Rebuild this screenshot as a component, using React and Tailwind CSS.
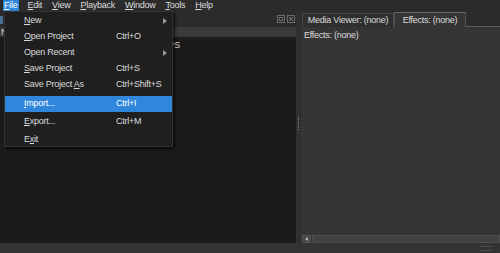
import React from "react";

const menuBar = [
  { label: "File", u: "F", active: true },
  { label: "Edit", u: "E" },
  { label: "View", u: "V" },
  { label: "Playback", u: "P" },
  { label: "Window", u: "W" },
  { label: "Tools", u: "T" },
  { label: "Help", u: "H" },
];

const fileMenu = [
  { pre: "", u: "N", post: "ew", sub: true, h: "h-[16px]" },
  { pre: "", u: "O", post: "pen Project", key: "Ctrl+O", h: "h-[16px]" },
  { pre: "Open Recent", u: "", post: "", sub: true, h: "h-[16px]" },
  { pre: "", u: "S", post: "ave Project", key: "Ctrl+S", h: "h-[16px]" },
  { pre: "Save Project ", u: "A", post: "s", key: "Ctrl+Shift+S", h: "h-[16px]" },
  { pre: "", u: "I", post: "mport...", key: "Ctrl+I", active: true, h: "h-[16px] mt-[3px]" },
  { pre: "", u: "E", post: "xport...", key: "Ctrl+M", h: "h-[16px] mt-[2px]" },
  { pre: "E", u: "x", post: "it", h: "h-[16px] mt-[2px]" },
];

function Mnemonic({ pre, u, post }) {
  return (
    <span>
      {pre}
      {u && <span className="underline underline-offset-[1px]">{u}</span>}
      {post}
    </span>
  );
}

function SubArrow() {
  return (
    <svg width="4" height="6" viewBox="0 0 4 6" className="absolute right-[5px]">
      <path d="M0 0 L4 3 L0 6 Z" fill="#9a9a9a" />
    </svg>
  );
}

function DockIcons() {
  return (
    <div className="flex items-center gap-[2px] mr-[1px]">
      <svg width="8" height="8" viewBox="0 0 8 8">
        <rect x="0.5" y="0.5" width="7" height="7" fill="none" stroke="#6a6a6a" />
        <rect x="2.5" y="2.5" width="3" height="3" fill="none" stroke="#6a6a6a" />
      </svg>
      <svg width="8" height="8" viewBox="0 0 8 8">
        <rect x="0.5" y="0.5" width="7" height="7" fill="none" stroke="#6a6a6a" />
        <path d="M2 2 L6 6 M6 2 L2 6" stroke="#7a7a7a" strokeWidth="1" />
      </svg>
    </div>
  );
}

export default function App() {
  return (
    <div
      className="relative w-[500px] h-[253px] flex flex-col bg-[#2b2b2b] text-[9px] tracking-[-0.25px] text-[#dcdcdc] overflow-hidden"
      style={{ fontFamily: '"Liberation Sans", Arial, sans-serif' }}
    >
      {/* menu bar */}
      <div className="h-[11px] flex items-center pl-[3px] leading-none">
        {menuBar.map((m) => (
          <div
            key={m.label}
            className={`h-[11px] px-[1px] mr-[8px] flex items-center ${m.active ? "bg-[#2f86db] text-white" : ""}`}
          >
            <Mnemonic pre="" u={m.u} post={m.label.slice(1)} />
          </div>
        ))}
      </div>

      <div className="flex-1 flex min-h-0">
        {/* left panel */}
        <div className="w-[296px] flex flex-col">
          <div className="h-[16px] flex items-center justify-between">
            <div className="w-[3px] h-[8px] bg-[#4a6f96] mt-[1px]" />
            <DockIcons />
          </div>
          <div className="h-[10px] bg-[#3a3a3a] flex items-center pl-[1px] leading-none">
            <span>N</span>
          </div>
          <div className="flex-1 bg-[#1b1b1b] pt-[3px]">
            <div className="w-[180px] text-right leading-[11px]">FPS</div>
          </div>
        </div>

        {/* splitter */}
        <div className="w-[5px] flex flex-col items-center justify-center bg-[#303030]">
          <div className="w-[2px] h-[13px] mb-[8px] border-l border-dotted border-[#8a8a8a]" />
        </div>

        {/* right panel */}
        <div className="flex-1 flex flex-col">
          <div className="h-[16px] flex items-end">
            <div className="h-[14px] w-[92px] ml-[1px] flex items-center justify-center border border-b-0 border-[#4a4a4a] bg-[#2f2f2f] leading-none">
              Media Viewer: (none)
            </div>
            <div className="h-[15px] w-[72px] flex items-center justify-center border border-b-0 border-[#555] border-t-[#6a6a6a] bg-[#353535] leading-none">
              Effects: (none)
            </div>
            <div className="flex-1 border-b border-[#5a5a5a]" />
          </div>
          <div className="flex-1 bg-[#353535] flex flex-col">
            <div className="pl-[3px] pt-[3px] leading-[11px]">Effects: (none)</div>
            <div className="flex-1" />
            <div className="h-[8px] flex gap-[1px] pl-[1px]">
              <div className="w-[9px] h-[8px] bg-[#444] border border-[#555] flex items-center justify-center">
                <svg width="3" height="4" viewBox="0 0 3 4">
                  <path d="M3 0 L0 2 L3 4 Z" fill="#bbb" />
                </svg>
              </div>
              <div className="flex-1 h-[8px] bg-[#414141] border border-[#4e4e4e]" />
            </div>
          </div>
        </div>
      </div>

      {/* status bar */}
      <div className="h-[10px] bg-[#333333] flex justify-end items-center pr-[7px]">
        <svg width="12" height="7" viewBox="0 0 12 7">
          {[0, 2, 4, 6, 8, 10].map((x) => (
            <g key={x}>
              <rect x={x} y="1" width="1" height="1" fill="#666" />
              <rect x={x} y="5" width="1" height="1" fill="#666" />
            </g>
          ))}
        </svg>
      </div>

      {/* file menu dropdown */}
      <div className="absolute left-[4px] top-[11px] w-[169px] h-[136px] bg-[#1f1f1f] border border-[#333] shadow-[2px_2px_3px_rgba(0,0,0,0.6)] pt-[1px]">
        {fileMenu.map((it, i) => (
          <div
            key={i}
            className={`relative flex items-center ${it.h} ${it.active ? "bg-[#2f86db] text-white" : ""}`}
          >
            <div className="w-[111px] pl-[19px]">
              <Mnemonic pre={it.pre} u={it.u} post={it.post} />
            </div>
            {it.key && <div>{it.key}</div>}
            {it.sub && <SubArrow />}
          </div>
        ))}
      </div>
    </div>
  );
}
